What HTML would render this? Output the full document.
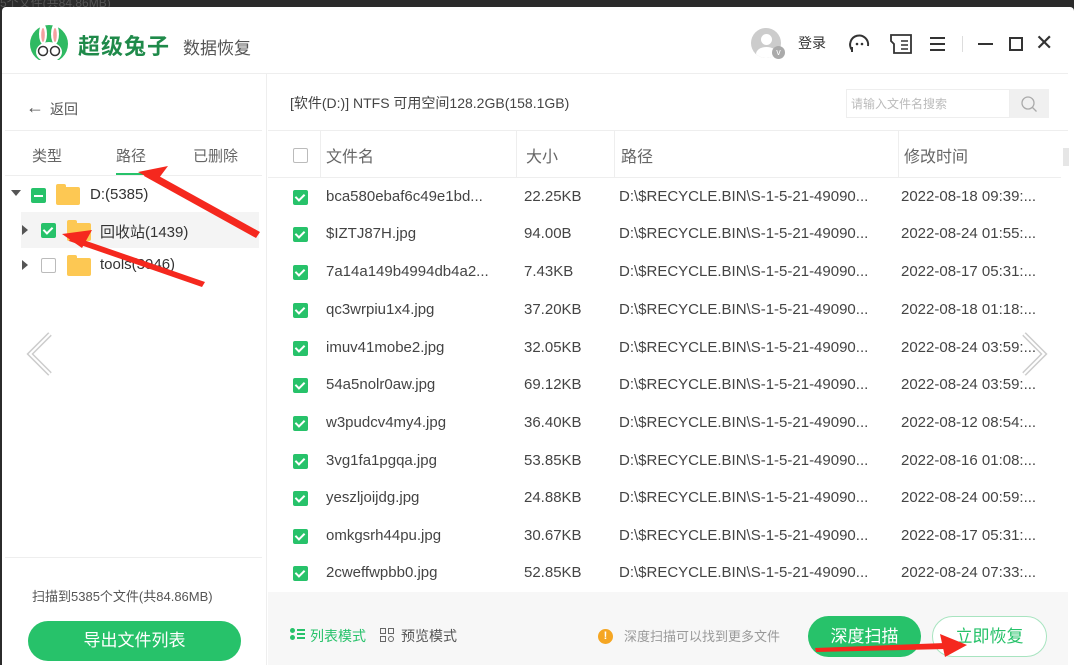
<!DOCTYPE html>
<html><head><meta charset="utf-8"><style>
*{margin:0;padding:0;box-sizing:border-box}
body{width:1074px;height:665px;overflow:hidden;background:#2b2b2b;font-family:"Liberation Sans","Noto Sans CJK SC",sans-serif;position:relative;color:#333}
.a{position:absolute}
.win{position:absolute;left:2px;top:7px;width:1072px;height:658px;background:#fff;border-radius:4px 4px 0 0}
.cb{position:absolute;width:15px;height:15px;border-radius:2px}
.on{background:#27c26a}
.on:after{content:"";position:absolute;left:4px;top:2px;width:4px;height:7px;border:solid #fff;border-width:0 2px 2px 0;transform:rotate(45deg)}
.mx{background:#27c26a}
.off{border:1px solid #bbb;background:#fff}
.row{position:absolute;left:268px;width:800px;height:37px;font-size:15px;color:#444}
.row span{position:absolute;top:9px;white-space:nowrap}
.fold{position:absolute;width:24px;height:18px;background:#fdc853;border-radius:2px}
.fold:before{content:"";position:absolute;left:0;top:-3px;width:10px;height:5px;background:#fdc853;border-radius:2px 2px 0 0}
</style></head><body>
<div class="a" style="left:0;top:-6px;color:#555;font-size:12px">5个文件(共84.86MB)</div>
<div class="win"></div>
<svg class="a" style="left:28px;top:22px" width="42" height="42" viewBox="0 0 42 42"><circle cx="21" cy="22" r="19" fill="#2fba62"/><ellipse cx="15" cy="12" rx="4" ry="10" fill="#fff"/><ellipse cx="27" cy="12" rx="4" ry="10" fill="#fff"/><ellipse cx="15" cy="13" rx="1.8" ry="7" fill="#f5a0a0"/><ellipse cx="27" cy="13" rx="1.8" ry="7" fill="#f5a0a0"/><ellipse cx="21" cy="30" rx="13" ry="10" fill="#fff"/><circle cx="15" cy="29" r="4.5" fill="none" stroke="#333" stroke-width="1.5"/><circle cx="27" cy="29" r="4.5" fill="none" stroke="#333" stroke-width="1.5"/><rect x="6" y="38" width="30" height="3" fill="#fff"/></svg>
<div class="a" style="left:78px;top:29px;font-size:22px;font-weight:bold;color:#1f8a4a;letter-spacing:1px">超级兔子</div>
<div class="a" style="left:183px;top:34px;font-size:17px;color:#555">数据恢复</div>
<div class="a" style="left:751px;top:28px;width:30px;height:30px;border-radius:50%;background:#ccc;overflow:hidden"><div style="position:absolute;left:10px;top:6px;width:11px;height:11px;border-radius:50%;background:#fff"></div><div style="position:absolute;left:5px;top:19px;width:21px;height:14px;border-radius:50%;background:#fff"></div></div>
<div class="a" style="left:772px;top:46px;width:13px;height:13px;border-radius:50%;background:#aaa;color:#fff;font-size:9px;text-align:center;line-height:13px">v</div>
<div class="a" style="left:798px;top:33px;font-size:14px;color:#333">登录</div>
<svg class="a" style="left:847px;top:32px" width="26" height="24" viewBox="0 0 26 24"><path d="M5 18 A9 9 0 1 1 21 14" fill="none" stroke="#333" stroke-width="2"/><circle cx="10" cy="12" r="1.3" fill="#333"/><circle cx="15" cy="12" r="1.3" fill="#333"/><path d="M5 15v5" stroke="#333" stroke-width="2"/></svg>
<svg class="a" style="left:888px;top:32px" width="26" height="24" viewBox="0 0 26 24"><path d="M3 3h20v18H6V12L3 9z" fill="none" stroke="#333" stroke-width="1.8"/><path d="M13 9h7M13 13h7M13 17h7" stroke="#333" stroke-width="1.5"/></svg>
<div class="a" style="left:930px;top:37px;width:15px;height:2px;background:#333;box-shadow:0 6px 0 #333,0 12px 0 #333"></div>
<div class="a" style="left:962px;top:36px;width:1px;height:16px;background:#ddd"></div>
<div class="a" style="left:978px;top:43px;width:15px;height:2px;background:#333"></div>
<div class="a" style="left:1009px;top:37px;width:14px;height:14px;border:2px solid #333"></div>
<div class="a" style="left:1035px;top:30px;font-size:22px;color:#333">✕</div>
<div class="a" style="left:2px;top:73px;width:1066px;height:1px;background:#eee"></div>
<div class="a" style="left:266px;top:73px;width:1px;height:592px;background:#eee"></div>
<div class="a" style="left:26px;top:97px;font-size:18px;color:#555">←</div>
<div class="a" style="left:50px;top:99px;font-size:14px;color:#555">返回</div>
<div class="a" style="left:5px;top:130px;width:257px;height:1px;background:#eee"></div>
<div class="a" style="left:32px;top:145px;font-size:15px;color:#666">类型</div>
<div class="a" style="left:116px;top:145px;font-size:15px;color:#666">路径</div>
<div class="a" style="left:116px;top:173px;width:32px;height:2px;background:#27c26a"></div>
<div class="a" style="left:193px;top:145px;font-size:15px;color:#666">已删除</div>
<div class="a" style="left:5px;top:175px;width:257px;height:1px;background:#eee"></div>
<div class="a" style="left:11px;top:190px;border:5px solid transparent;border-top:6px solid #555"></div>
<div class="cb mx" style="left:31px;top:188px;"></div><div class="a" style="left:34px;top:195px;width:9px;height:2px;background:#fff"></div>
<div class="fold" style="left:56px;top:187px"></div>
<div class="a" style="left:90px;top:186px;font-size:15px">D:(5385)</div>
<div class="a" style="left:21px;top:212px;width:238px;height:36px;background:#f4f4f4"></div>
<div class="a" style="left:22px;top:225px;border:5px solid transparent;border-left:6px solid #555"></div>
<div class="cb on" style="left:41px;top:223px"></div>
<div class="fold" style="left:67px;top:223px"></div>
<div class="a" style="left:100px;top:221px;font-size:15px">回收站(1439)</div>
<div class="a" style="left:22px;top:260px;border:5px solid transparent;border-left:6px solid #555"></div>
<div class="cb off" style="left:41px;top:258px"></div>
<div class="fold" style="left:67px;top:258px"></div>
<div class="a" style="left:100px;top:256px;font-size:15px">tools(3946)</div>
<svg class="a" style="left:24px;top:330px" width="32" height="48"><path d="M26 4L6 24l20 20" fill="none" stroke="#ccc" stroke-width="5"/><path d="M26 4L6 24l20 20" fill="none" stroke="#fff" stroke-width="2"/></svg>
<div class="a" style="left:5px;top:557px;width:257px;height:1px;background:#eee"></div>
<div class="a" style="left:32px;top:586px;font-size:13px;color:#555">扫描到5385个文件(共84.86MB)</div>
<div class="a" style="left:28px;top:621px;width:213px;height:40px;border-radius:20px;background:#27c26a;color:#fff;font-size:17px;text-align:center;line-height:40px">导出文件列表</div>
<div class="a" style="left:290px;top:93px;font-size:14px;color:#444">[软件(D:)] NTFS 可用空间128.2GB(158.1GB)</div>
<div class="a" style="left:846px;top:89px;width:164px;height:29px;border:1px solid #eee;font-size:12px;color:#bbb;padding:5px 4px">请输入文件名搜索</div>
<div class="a" style="left:1010px;top:89px;width:39px;height:29px;background:#f0f0f0"></div>
<svg class="a" style="left:1020px;top:95px" width="18" height="18"><circle cx="8" cy="8" r="6" fill="none" stroke="#aaa" stroke-width="1.3"/><path d="M12.5 12.5l4 4" stroke="#aaa" stroke-width="1.3"/></svg>
<div class="a" style="left:268px;top:130px;width:800px;height:1px;background:#eee"></div>
<div class="a" style="left:268px;top:177px;width:793px;height:1px;background:#eee"></div>
<div class="cb off" style="left:293px;top:148px"></div>
<div class="a" style="left:320px;top:131px;width:1px;height:46px;background:#eee"></div>
<div class="a" style="left:516px;top:131px;width:1px;height:46px;background:#eee"></div>
<div class="a" style="left:614px;top:131px;width:1px;height:46px;background:#eee"></div>
<div class="a" style="left:898px;top:131px;width:1px;height:46px;background:#eee"></div>
<div class="a" style="left:1063px;top:148px;width:6px;height:18px;background:#e6e6e6"></div>
<div class="a" style="left:326px;top:143px;font-size:16px;color:#666">文件名</div>
<div class="a" style="left:526px;top:143px;font-size:16px;color:#666">大小</div>
<div class="a" style="left:621px;top:143px;font-size:16px;color:#666">路径</div>
<div class="a" style="left:904px;top:143px;font-size:16px;color:#666">修改时间</div>

<div class="row" style="top:179px"><div class="cb on" style="left:25px;top:11px"></div><span style="left:58px">bca580ebaf6c49e1bd...</span><span style="left:256px">22.25KB</span><span style="left:351px">D:\$RECYCLE.BIN\S-1-5-21-49090...</span><span style="left:633px">2022-08-18 09:39:...</span></div>
<div class="row" style="top:216px"><div class="cb on" style="left:25px;top:11px"></div><span style="left:58px">$IZTJ87H.jpg</span><span style="left:256px">94.00B</span><span style="left:351px">D:\$RECYCLE.BIN\S-1-5-21-49090...</span><span style="left:633px">2022-08-24 01:55:...</span></div>
<div class="row" style="top:254px"><div class="cb on" style="left:25px;top:11px"></div><span style="left:58px">7a14a149b4994db4a2...</span><span style="left:256px">7.43KB</span><span style="left:351px">D:\$RECYCLE.BIN\S-1-5-21-49090...</span><span style="left:633px">2022-08-17 05:31:...</span></div>
<div class="row" style="top:292px"><div class="cb on" style="left:25px;top:11px"></div><span style="left:58px">qc3wrpiu1x4.jpg</span><span style="left:256px">37.20KB</span><span style="left:351px">D:\$RECYCLE.BIN\S-1-5-21-49090...</span><span style="left:633px">2022-08-18 01:18:...</span></div>
<div class="row" style="top:330px"><div class="cb on" style="left:25px;top:11px"></div><span style="left:58px">imuv41mobe2.jpg</span><span style="left:256px">32.05KB</span><span style="left:351px">D:\$RECYCLE.BIN\S-1-5-21-49090...</span><span style="left:633px">2022-08-24 03:59:...</span></div>
<div class="row" style="top:367px"><div class="cb on" style="left:25px;top:11px"></div><span style="left:58px">54a5nolr0aw.jpg</span><span style="left:256px">69.12KB</span><span style="left:351px">D:\$RECYCLE.BIN\S-1-5-21-49090...</span><span style="left:633px">2022-08-24 03:59:...</span></div>
<div class="row" style="top:405px"><div class="cb on" style="left:25px;top:11px"></div><span style="left:58px">w3pudcv4my4.jpg</span><span style="left:256px">36.40KB</span><span style="left:351px">D:\$RECYCLE.BIN\S-1-5-21-49090...</span><span style="left:633px">2022-08-12 08:54:...</span></div>
<div class="row" style="top:443px"><div class="cb on" style="left:25px;top:11px"></div><span style="left:58px">3vg1fa1pgqa.jpg</span><span style="left:256px">53.85KB</span><span style="left:351px">D:\$RECYCLE.BIN\S-1-5-21-49090...</span><span style="left:633px">2022-08-16 01:08:...</span></div>
<div class="row" style="top:480px"><div class="cb on" style="left:25px;top:11px"></div><span style="left:58px">yeszljoijdg.jpg</span><span style="left:256px">24.88KB</span><span style="left:351px">D:\$RECYCLE.BIN\S-1-5-21-49090...</span><span style="left:633px">2022-08-24 00:59:...</span></div>
<div class="row" style="top:518px"><div class="cb on" style="left:25px;top:11px"></div><span style="left:58px">omkgsrh44pu.jpg</span><span style="left:256px">30.67KB</span><span style="left:351px">D:\$RECYCLE.BIN\S-1-5-21-49090...</span><span style="left:633px">2022-08-17 05:31:...</span></div>
<div class="row" style="top:555px"><div class="cb on" style="left:25px;top:11px"></div><span style="left:58px">2cweffwpbb0.jpg</span><span style="left:256px">52.85KB</span><span style="left:351px">D:\$RECYCLE.BIN\S-1-5-21-49090...</span><span style="left:633px">2022-08-24 07:33:...</span></div>
<svg class="a" style="left:1018px;top:330px" width="34" height="48"><path d="M6 4l20 20L6 44" fill="none" stroke="#ccc" stroke-width="5"/><path d="M6 4l20 20L6 44" fill="none" stroke="#fff" stroke-width="2"/></svg>
<div class="a" style="left:268px;top:592px;width:800px;height:73px;background:#f7f7f7"></div>
<div class="a" style="left:290px;top:628px;width:5px;height:5px;border-radius:50%;background:#27c26a;box-shadow:0 7px 0 #27c26a"></div>
<div class="a" style="left:297px;top:629px;width:8px;height:1.5px;background:#27c26a;box-shadow:0 4px 0 #27c26a,0 8px 0 #27c26a"></div>
<div class="a" style="left:310px;top:626px;font-size:14px;color:#27c26a">列表模式</div>
<div class="a" style="left:380px;top:628px;width:6px;height:6px;border:1px solid #666"></div>
<div class="a" style="left:388px;top:628px;width:6px;height:6px;border:1px solid #666"></div>
<div class="a" style="left:380px;top:636px;width:6px;height:6px;border:1px solid #666"></div>
<div class="a" style="left:388px;top:636px;width:6px;height:6px;border:1px solid #666;border-radius:50%"></div>
<div class="a" style="left:401px;top:626px;font-size:14px;color:#555">预览模式</div>
<div class="a" style="left:598px;top:629px;width:15px;height:15px;border-radius:50%;background:#f5a623;color:#fff;font-size:11px;font-weight:bold;text-align:center;line-height:15px">!</div>
<div class="a" style="left:624px;top:626px;font-size:13px;color:#999">深度扫描可以找到更多文件</div>
<div class="a" style="left:808px;top:616px;width:113px;height:41px;border-radius:21px;background:#27c26a;color:#fff;font-size:17px;text-align:center;line-height:41px">深度扫描</div>
<div class="a" style="left:932px;top:616px;width:115px;height:41px;border-radius:21px;border:1px solid #a8e4c0;background:#fff;color:#27c26a;font-size:17px;text-align:center;line-height:39px">立即恢复</div>
<svg class="a" style="left:0;top:0" width="1074" height="665"><g fill="#f5281e">
<polygon points="148,170 260,232 256,238 144,176"/><polygon points="138,172 168,166 156,182"/>
<polygon points="72,236 205,282 202,287 69,241"/><polygon points="62,234 92,230 82,248"/>
<polygon points="815,648 945,643 946,649 816,652"/><polygon points="967,645 940,634 945,657"/>
</g></svg>
</body></html>
